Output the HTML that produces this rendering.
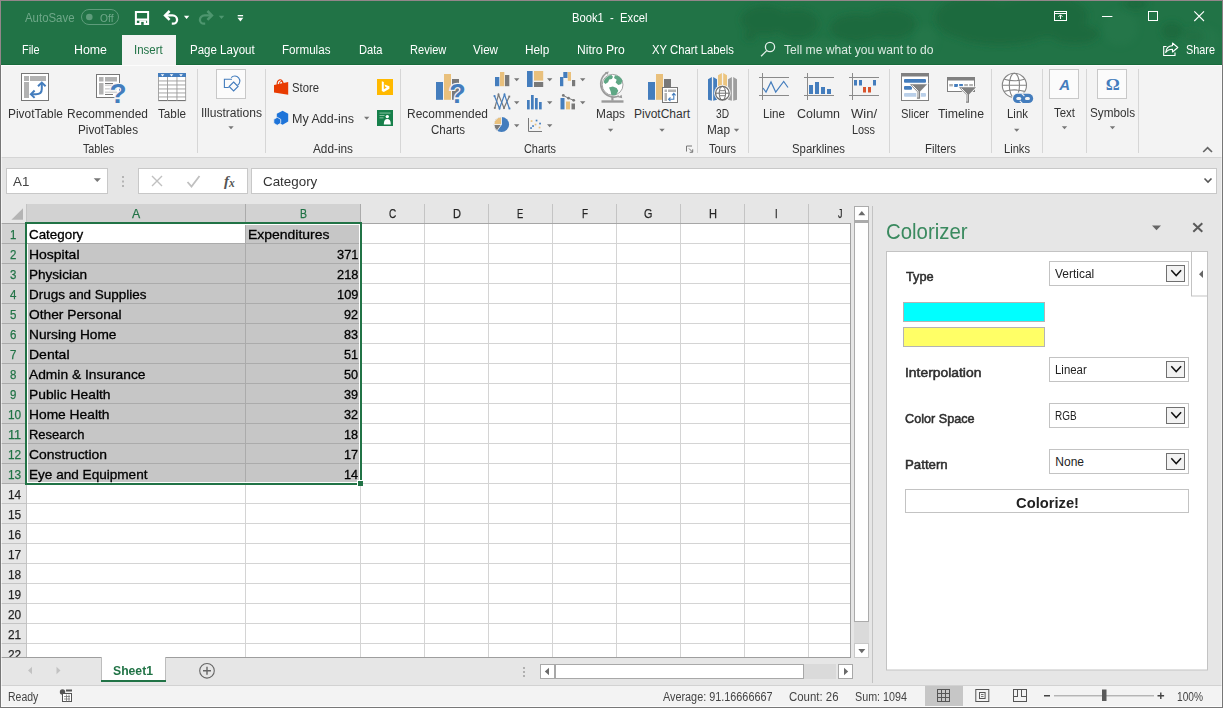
<!DOCTYPE html>
<html lang="en"><head><meta charset="utf-8"><title>Book1 - Excel</title>
<style>
html,body{margin:0;padding:0;}
body{width:1223px;height:708px;overflow:hidden;position:relative;background:#217346;font-family:"Liberation Sans",sans-serif;}
#g{position:absolute;left:0;top:0;}
.t{position:absolute;white-space:pre;line-height:20px;height:20px;transform-origin:0 50%;font-family:"Liberation Sans",sans-serif;}
.s{font-family:"Liberation Serif",serif;}
</style></head>
<body>
<svg id="g" width="1223" height="708" viewBox="0 0 1223 708">
<defs><filter id="blur2" x="-20%" y="-50%" width="140%" height="200%"><feGaussianBlur stdDeviation="3"/></filter></defs>
<rect x="0" y="0" width="1223" height="65" fill="#217346" />
<g fill="#1d693d" opacity="0.85" filter="url(#blur2)"><ellipse cx="765" cy="20" rx="24" ry="15"/><ellipse cx="797" cy="24" rx="22" ry="15"/><ellipse cx="750" cy="36" rx="6" ry="5"/><ellipse cx="856" cy="28" rx="26" ry="14"/><ellipse cx="890" cy="24" rx="26" ry="15"/><ellipse cx="975" cy="18" rx="40" ry="22"/><ellipse cx="1040" cy="16" rx="48" ry="22"/><ellipse cx="1075" cy="34" rx="24" ry="10"/><ellipse cx="1000" cy="36" rx="40" ry="9"/><ellipse cx="1172" cy="31" rx="10" ry="9"/><ellipse cx="1193" cy="36" rx="11" ry="7"/><ellipse cx="1136" cy="4" rx="12" ry="6"/></g>
<g fill="#2a7c4f" opacity="0.35" filter="url(#blur2)"><ellipse cx="925" cy="40" rx="12" ry="14"/><ellipse cx="1120" cy="28" rx="18" ry="18"/><ellipse cx="1200" cy="40" rx="20" ry="14"/><ellipse cx="825" cy="48" rx="30" ry="8"/></g>
<rect x="122" y="35" width="54" height="30" fill="#f3f3f3" />
<rect x="0" y="65" width="1223" height="92" fill="#f3f3f3" />
<rect x="0" y="157" width="1223" height="1" fill="#d5d5d5" />
<rect x="0" y="158" width="1223" height="46" fill="#e6e6e6" />
<rect x="6.5" y="168.5" width="101" height="25" fill="#ffffff" stroke="#c8c8c8"/>
<path d="M93.700 178.300h7.200l-3.600 3.800z" fill="#777"/>
<rect x="122" y="176" width="2" height="2" fill="#b4b4b4" />
<rect x="122" y="180.5" width="2" height="2" fill="#b4b4b4" />
<rect x="122" y="185" width="2" height="2" fill="#b4b4b4" />
<rect x="138.5" y="168.5" width="109" height="25" fill="#ffffff" stroke="#c8c8c8"/>
<path d="M152 176l10 10M162 176l-10 10" stroke="#c0c0c0" stroke-width="1.4" fill="none"/>
<path d="M187.5 182l4 4.5l8-10.5" stroke="#c0c0c0" stroke-width="1.8" fill="none"/>
<rect x="251.5" y="168.5" width="965" height="25" fill="#ffffff" stroke="#c8c8c8"/>
<path d="M1204.5 178.5l3.5 3.5l3.5-3.5" stroke="#555" stroke-width="1.6" fill="none"/>
<rect x="1" y="204" width="850" height="453" fill="#ffffff" />
<rect x="1" y="204" width="877" height="19" fill="#e6e6e6" />
<rect x="27" y="204" width="334" height="18" fill="#d2d2d2" />
<rect x="1" y="223" width="25" height="434" fill="#e6e6e6" />
<rect x="1" y="223" width="24" height="261" fill="#d2d2d2" />
<path d="M23 208.300v11.400h-11.600z" fill="#b4b4b4"/>
<rect x="245" y="204" width="1" height="19" fill="#ababab" />
<rect x="360" y="204" width="1" height="19" fill="#ababab" />
<rect x="424" y="204" width="1" height="19" fill="#c4c4c4" />
<rect x="488" y="204" width="1" height="19" fill="#c4c4c4" />
<rect x="552" y="204" width="1" height="19" fill="#c4c4c4" />
<rect x="616" y="204" width="1" height="19" fill="#c4c4c4" />
<rect x="680" y="204" width="1" height="19" fill="#c4c4c4" />
<rect x="744" y="204" width="1" height="19" fill="#c4c4c4" />
<rect x="808" y="204" width="1" height="19" fill="#c4c4c4" />
<rect x="26" y="204" width="1" height="19" fill="#c4c4c4" />
<rect x="1" y="223" width="850" height="1" fill="#a6a6a6" />
<rect x="1" y="243" width="25" height="1" fill="#ababab" />
<rect x="1" y="263" width="25" height="1" fill="#ababab" />
<rect x="1" y="283" width="25" height="1" fill="#ababab" />
<rect x="1" y="303" width="25" height="1" fill="#ababab" />
<rect x="1" y="323" width="25" height="1" fill="#ababab" />
<rect x="1" y="343" width="25" height="1" fill="#ababab" />
<rect x="1" y="363" width="25" height="1" fill="#ababab" />
<rect x="1" y="383" width="25" height="1" fill="#ababab" />
<rect x="1" y="403" width="25" height="1" fill="#ababab" />
<rect x="1" y="423" width="25" height="1" fill="#ababab" />
<rect x="1" y="443" width="25" height="1" fill="#ababab" />
<rect x="1" y="463" width="25" height="1" fill="#ababab" />
<rect x="1" y="483" width="25" height="1" fill="#ababab" />
<rect x="1" y="503" width="25" height="1" fill="#c4c4c4" />
<rect x="1" y="523" width="25" height="1" fill="#c4c4c4" />
<rect x="1" y="543" width="25" height="1" fill="#c4c4c4" />
<rect x="1" y="563" width="25" height="1" fill="#c4c4c4" />
<rect x="1" y="583" width="25" height="1" fill="#c4c4c4" />
<rect x="1" y="603" width="25" height="1" fill="#c4c4c4" />
<rect x="1" y="623" width="25" height="1" fill="#c4c4c4" />
<rect x="1" y="643" width="25" height="1" fill="#c4c4c4" />
<rect x="26" y="224" width="1" height="433" fill="#c4c4c4" />
<rect x="245" y="224" width="1" height="433" fill="#d4d4d4" />
<rect x="360" y="224" width="1" height="433" fill="#d4d4d4" />
<rect x="424" y="224" width="1" height="433" fill="#d4d4d4" />
<rect x="488" y="224" width="1" height="433" fill="#d4d4d4" />
<rect x="552" y="224" width="1" height="433" fill="#d4d4d4" />
<rect x="616" y="224" width="1" height="433" fill="#d4d4d4" />
<rect x="680" y="224" width="1" height="433" fill="#d4d4d4" />
<rect x="744" y="224" width="1" height="433" fill="#d4d4d4" />
<rect x="808" y="224" width="1" height="433" fill="#d4d4d4" />
<rect x="27" y="243" width="823" height="1" fill="#d4d4d4" />
<rect x="27" y="263" width="823" height="1" fill="#d4d4d4" />
<rect x="27" y="283" width="823" height="1" fill="#d4d4d4" />
<rect x="27" y="303" width="823" height="1" fill="#d4d4d4" />
<rect x="27" y="323" width="823" height="1" fill="#d4d4d4" />
<rect x="27" y="343" width="823" height="1" fill="#d4d4d4" />
<rect x="27" y="363" width="823" height="1" fill="#d4d4d4" />
<rect x="27" y="383" width="823" height="1" fill="#d4d4d4" />
<rect x="27" y="403" width="823" height="1" fill="#d4d4d4" />
<rect x="27" y="423" width="823" height="1" fill="#d4d4d4" />
<rect x="27" y="443" width="823" height="1" fill="#d4d4d4" />
<rect x="27" y="463" width="823" height="1" fill="#d4d4d4" />
<rect x="27" y="483" width="823" height="1" fill="#d4d4d4" />
<rect x="27" y="503" width="823" height="1" fill="#d4d4d4" />
<rect x="27" y="523" width="823" height="1" fill="#d4d4d4" />
<rect x="27" y="543" width="823" height="1" fill="#d4d4d4" />
<rect x="27" y="563" width="823" height="1" fill="#d4d4d4" />
<rect x="27" y="583" width="823" height="1" fill="#d4d4d4" />
<rect x="27" y="603" width="823" height="1" fill="#d4d4d4" />
<rect x="27" y="623" width="823" height="1" fill="#d4d4d4" />
<rect x="27" y="643" width="823" height="1" fill="#d4d4d4" />
<rect x="27" y="224" width="333" height="259" fill="#ffffff" />
<rect x="28" y="225" width="331" height="257" fill="#c6c6c6" />
<rect x="27" y="224" width="218" height="19" fill="#ffffff" />
<rect x="28" y="243" width="331" height="1" fill="#ababab" />
<rect x="28" y="263" width="331" height="1" fill="#ababab" />
<rect x="28" y="283" width="331" height="1" fill="#ababab" />
<rect x="28" y="303" width="331" height="1" fill="#ababab" />
<rect x="28" y="323" width="331" height="1" fill="#ababab" />
<rect x="28" y="343" width="331" height="1" fill="#ababab" />
<rect x="28" y="363" width="331" height="1" fill="#ababab" />
<rect x="28" y="383" width="331" height="1" fill="#ababab" />
<rect x="28" y="403" width="331" height="1" fill="#ababab" />
<rect x="28" y="423" width="331" height="1" fill="#ababab" />
<rect x="28" y="443" width="331" height="1" fill="#ababab" />
<rect x="28" y="463" width="331" height="1" fill="#ababab" />
<rect x="245" y="225" width="1" height="257" fill="#ababab" />
<rect x="27" y="243" width="218" height="1" fill="#ababab" />
<rect x="25" y="222" width="337" height="2" fill="#217346" />
<rect x="25" y="222" width="2" height="263" fill="#217346" />
<rect x="360" y="222" width="2" height="259" fill="#217346" />
<rect x="25" y="483" width="332" height="2" fill="#217346" />
<rect x="357" y="480" width="6" height="6" fill="#ffffff" />
<rect x="358" y="481" width="5" height="5" fill="#217346" />
<rect x="850" y="223" width="1" height="435" fill="#a0a0a0" />
<rect x="851" y="204" width="27" height="481" fill="#e6e6e6" />
<rect x="854.5" y="222.5" width="14" height="399" fill="#ffffff" stroke="#ababab"/>
<rect x="854.5" y="206.5" width="14" height="14" fill="#ffffff" stroke="#ababab"/>
<rect x="854" y="221" width="15" height="1.5" fill="#ababab" />
<path d="M858.3 215.3h7l-3.5-4.2z" fill="#6a6a6a"/>
<rect x="854.5" y="643.5" width="14" height="14" fill="#ffffff" stroke="#c8c8c8"/>
<path d="M858.3 649h7l-3.5 4.200z" fill="#6a6a6a"/>
<rect x="854" y="622" width="15" height="21" fill="#dadada" />
<rect x="872" y="206" width="1" height="477" fill="#c3c3c3" />
<rect x="0" y="658" width="851" height="27" fill="#e6e6e6" />
<rect x="1" y="657" width="850" height="1" fill="#9e9e9e" />
<path d="M32 666.800v7.400l-4-3.700z" fill="#c2c2c2"/><path d="M56.500 666.800v7.400l4-3.700z" fill="#c2c2c2"/>
<rect x="101" y="657" width="65" height="23" fill="#ffffff" />
<rect x="101" y="680" width="65" height="2" fill="#217346" />
<rect x="101" y="657" width="1" height="23" fill="#bdbdbd" /><rect x="165" y="657" width="1" height="23" fill="#bdbdbd" />
<circle cx="207" cy="670.800" r="7.300" fill="none" stroke="#666" stroke-width="1.100"/><path d="M203 670.800h8M207 666.800v8" stroke="#666" stroke-width="1.400"/>
<rect x="523" y="667" width="2" height="2" fill="#b0b0b0" />
<rect x="523" y="671" width="2" height="2" fill="#b0b0b0" />
<rect x="523" y="675" width="2" height="2" fill="#b0b0b0" />
<rect x="540.5" y="664.5" width="14" height="14" fill="#ffffff" stroke="#a8a8a8"/>
<path d="M549 667.800v7.400l-4.200-3.700z" fill="#6a6a6a"/>
<rect x="555.5" y="664.5" width="248" height="14" fill="#ffffff" stroke="#a8a8a8"/>
<rect x="804" y="664" width="32" height="15" fill="#dadada" />
<rect x="838.5" y="664.5" width="14" height="14" fill="#ffffff" stroke="#a8a8a8"/>
<path d="M844 667.800v7.400l4.200-3.700z" fill="#6a6a6a"/>
<rect x="0" y="685" width="1223" height="23" fill="#f3f3f3" />
<rect x="0" y="685" width="1223" height="1" fill="#d2d2d2" />
<circle cx="62.500" cy="692" r="2.700" fill="#555"/><rect x="66" y="689.5" width="6" height="2" fill="#555" /><rect x="62.5" y="693.5" width="9" height="8" fill="#ffffff" stroke="#555"/><path d="M64 696.500h6M64 699h6M66.500 694.500v7M69 694.500v7" stroke="#777" stroke-width="0.800"/>
<rect x="925" y="686" width="38" height="21" fill="#c6c6c6" />
<rect x="937.5" y="689.5" width="12" height="12" fill="none" stroke="#555"/><path d="M941.500 690v12M945.500 690v12M938 693.500h12M938 697.500h12" stroke="#555" stroke-width="1"/>
<rect x="975.8" y="689.5" width="13" height="12" fill="none" stroke="#555"/><rect x="979.5" y="692.5" width="5.6" height="6" fill="none" stroke="#555"/><path d="M981 694.500h2.600M981 696.500h2.600" stroke="#555" stroke-width="0.800"/>
<rect x="1013.5" y="689.5" width="13" height="12" fill="none" stroke="#555"/><path d="M1017.500 690v6.500M1021.500 690v6.500M1014 696.500h4M1021 696.500h5" stroke="#555" stroke-width="1"/>
<rect x="1044" y="695" width="6" height="1.5" fill="#444" />
<rect x="1054" y="695.3" width="100" height="1" fill="#9a9a9a" />
<rect x="1102" y="689.5" width="4.5" height="11.5" fill="#5a5a5a" />
<path d="M1157.500 695.800h6.600M1160.800 692.500v6.600" stroke="#444" stroke-width="1.400"/>
<rect x="873" y="204" width="350" height="481" fill="#e6e6e6" />
<rect x="886.5" y="251.5" width="321" height="418.5" fill="#ffffff" stroke="#c3c3c3"/>
<path d="M1152 225.500h9l-4.500 4.700z" fill="#666"/>
<path d="M1193.300 223.200l9 8.500M1202.300 223.200l-9 8.500" stroke="#5a5a5a" stroke-width="2"/>
<rect x="1191.5" y="251.5" width="16" height="44.5" fill="#ffffff" stroke="#c3c3c3"/>
<path d="M1203 270.300v7.700l-4-3.850z" fill="#666"/>
<rect x="1049.5" y="261.5" width="139" height="24" fill="#ffffff" stroke="#c3c3c3"/>
<rect x="1166.5" y="265.5" width="18" height="16" fill="#f2f2f2" stroke="#707070"/>
<path d="M1171.300 270.3l4.900 5.300l4.900-5.300" stroke="#111" stroke-width="1.500" fill="none"/>
<rect x="1049.5" y="357.5" width="139" height="24" fill="#ffffff" stroke="#c3c3c3"/>
<rect x="1166.5" y="361.5" width="18" height="16" fill="#f2f2f2" stroke="#707070"/>
<path d="M1171.300 366.3l4.900 5.300l4.900-5.300" stroke="#111" stroke-width="1.500" fill="none"/>
<rect x="1049.5" y="403.5" width="139" height="24" fill="#ffffff" stroke="#c3c3c3"/>
<rect x="1166.5" y="407.5" width="18" height="16" fill="#f2f2f2" stroke="#707070"/>
<path d="M1171.300 412.3l4.900 5.300l4.900-5.300" stroke="#111" stroke-width="1.500" fill="none"/>
<rect x="1049.5" y="449.5" width="139" height="24" fill="#ffffff" stroke="#c3c3c3"/>
<rect x="1166.5" y="453.5" width="18" height="16" fill="#f2f2f2" stroke="#707070"/>
<path d="M1171.300 458.3l4.900 5.300l4.900-5.300" stroke="#111" stroke-width="1.500" fill="none"/>
<rect x="903.5" y="302.5" width="141" height="19" fill="#00ffff" stroke="#b4b4b4"/>
<rect x="903.5" y="327.5" width="141" height="19" fill="#ffff66" stroke="#b4b4b4"/>
<rect x="905.5" y="489.5" width="283" height="23" fill="#ffffff" stroke="#c3c3c3"/>
<g font-family="Liberation Sans, sans-serif">
<rect x="81.5" y="9.5" width="37" height="15" rx="7.5" fill="none" stroke="#5e9c7b" stroke-width="1"/><circle cx="89.3" cy="17" r="3.3" fill="#5e9c7b"/><path d="M135.900 11.900h12.200v12h-12.200z" fill="none" stroke="#fff" stroke-width="2"/><rect x="136" y="18.5" width="12" height="2.2" fill="#fff" /><rect x="139.3" y="20.5" width="6.9" height="4.3" fill="#fff" /><rect x="141.2" y="21.9" width="2.5" height="3" fill="#217346" /><g fill="none" stroke="#fff" stroke-width="2.500"><path d="M169.600 11l-4.500 4.400l4.500 4.400"/><path d="M165.200 15.400h7.300a4.600 4.600 0 0 1 4.600 4.600a4 4 0 0 1-4 3.700h-1.300" stroke-width="2.300"/></g><path d="M183.900 15.800h5.400l-2.700 3.100z" fill="#fff"/><g fill="none" stroke="#4e966f" stroke-width="2.500"><path d="M207.400 11l4.500 4.400l-4.500 4.400"/><path d="M211.800 15.400h-7.300a4.600 4.600 0 0 0-4.600 4.600a4 4 0 0 0 4 3.700h1.300" stroke-width="2.300"/></g><path d="M218.800 15.800h5.400l-2.700 3.100z" fill="#4e966f"/><rect x="237.7" y="15" width="5.4" height="1.3" fill="#fff" /><path d="M237.500 17.700h5.800l-2.900 3.700z" fill="#fff"/><g fill="none" stroke="#e4efe9" stroke-width="1.3"><circle cx="770" cy="47" r="4.6"/><path d="M766.7 50.6l-5.6 5.6"/></g><g fill="none" stroke="#fff" stroke-width="1.1"><path d="M1166.5 46.5h-2.8v9h11.3v-3"/><path d="M1172.5 43l5.3 4.5l-5.3 4.5v-2.7c-3.3 0-5.2 1-6.8 3.2c.4-4 2.6-6.6 6.8-6.9z" stroke-linejoin="round"/></g><g fill="none" stroke="#fff" stroke-width="1"><rect x="1054.5" y="11.5" width="12" height="9"/><path d="M1054.5 13.5h12" /><path d="M1060.5 19v-4M1058.5 16.8l2-2l2 2"/></g><rect x="1102" y="16" width="10.4" height="1" fill="#fff" /><rect x="1148.5" y="11.5" width="9" height="9" fill="none" stroke="#fff" stroke-width="1"/><path d="M1194.3 11.3l9.7 9.7M1204 11.3l-9.7 9.7" stroke="#fff" stroke-width="1.1"/>
<rect x="197" y="69" width="1" height="84" fill="#d6d6d6" /><rect x="265" y="69" width="1" height="84" fill="#d6d6d6" /><rect x="400" y="69" width="1" height="84" fill="#d6d6d6" /><rect x="697" y="69" width="1" height="84" fill="#d6d6d6" /><rect x="748" y="69" width="1" height="84" fill="#d6d6d6" /><rect x="889" y="69" width="1" height="84" fill="#d6d6d6" /><rect x="991" y="69" width="1" height="84" fill="#d6d6d6" /><rect x="1042" y="69" width="1" height="84" fill="#d6d6d6" /><rect x="1086" y="69" width="1" height="84" fill="#d6d6d6" /><rect x="1138" y="69" width="1" height="84" fill="#d6d6d6" />
<rect x="21.5" y="73.5" width="27" height="27" fill="#fff" stroke="#777"/><rect x="24" y="76" width="5" height="5" fill="#b2b2b2" /><rect x="30" y="76" width="16" height="5" fill="#b2b2b2" /><rect x="24" y="82" width="5" height="16" fill="#b2b2b2" /><g fill="none" stroke="#447dbd" stroke-width="2"><path d="M31.500 94.200h4.500c3.800 0 5.800-1.800 5.800-5.200v-5.500"/><path d="M34.600 90.500l-3.700 3.700l3.700 3.700"/><path d="M38 86.300l3.800-3.700l3.800 3.700"/></g>
<rect x="96.5" y="74.5" width="23" height="23" fill="#fff" stroke="#777"/><rect x="99" y="77" width="4.5" height="4.5" fill="#b2b2b2" /><rect x="105" y="77" width="12" height="4.5" fill="#b2b2b2" /><rect x="99" y="83" width="4.5" height="11.5" fill="#b2b2b2" /><rect x="105" y="84.5" width="12" height="1.6" fill="#d4d4d4" /><rect x="105" y="88" width="12" height="1.6" fill="#d4d4d4" /><rect x="105" y="91.5" width="12" height="1.6" fill="#d4d4d4" /><rect x="105" y="83" width="8" height="1" fill="#777" /><rect x="105" y="94" width="8" height="1" fill="#777" /><text x="109.6" y="102.7" font-size="28" fill="#447dbd" font-weight="700" stroke="#f3f3f3" stroke-width="2.4" paint-order="stroke">?</text>
<rect x="158" y="77" width="28" height="24" fill="#fff" /><rect x="158" y="73" width="28" height="4" fill="#447dbd" /><path d="M160.7 74.2h3.6l-1.8 2.2z" fill="#fff"/><path d="M169.7 74.2h3.6l-1.8 2.2z" fill="#fff"/><path d="M179.2 74.2h3.6l-1.8 2.2z" fill="#fff"/><rect x="158" y="80.5" width="28" height="0.9" fill="#9c9c9c" /><rect x="158" y="84.5" width="28" height="0.9" fill="#9c9c9c" /><rect x="158" y="88.5" width="28" height="0.9" fill="#9c9c9c" /><rect x="158" y="92.5" width="28" height="0.9" fill="#9c9c9c" /><rect x="158" y="96.5" width="28" height="0.9" fill="#9c9c9c" /><rect x="158" y="100" width="28" height="1.1" fill="#757575" /><rect x="158" y="77" width="0.9" height="24" fill="#9c9c9c" /><rect x="167" y="77" width="0.9" height="24" fill="#9c9c9c" /><rect x="176.5" y="77" width="0.9" height="24" fill="#9c9c9c" /><rect x="185.2" y="77" width="0.9" height="24" fill="#9c9c9c" />
<rect x="216.5" y="69.5" width="29" height="29" fill="#fbfbfb" stroke="#c8c8c8"/><g fill="none" stroke="#447dbd" stroke-width="1.1"><path d="M232 79.3h-7.6v8.2h4.4"/><path d="M231.2 77.6a5 5 0 1 1 6.4 7.6"/><path d="M233.6 82l4.5 4.5l-4.5 4.5l-4.5-4.5z" fill="#fbfbfb"/></g><path d="M228.3 126.3h5.4l-2.7 3z" fill="#777"/>
<path d="M274 85l14.200-3v12.700l-14.200-2.100z" fill="#e83b01"/><path d="M277.3 85.4c-.6-3.4.6-5.3 2.4-5.6c1.7-.3 3 1 3.5 4" fill="none" stroke="#e83b01" stroke-width="1.2"/><path d="M279.6 84.6c-.2-2 .4-3 1.4-3.2c1-.2 1.8.6 2 2.400" fill="none" stroke="#e83b01" stroke-width="1"/><path d="M282.6 110.8l5.6 3v7.6l-5.6 3.4l-5.8-3.4v-7.600z" fill="#1e74d9"/><path d="M277.200 117.3l3.500 2v3.900l-3.500 2.100l-3.400-2.100v-3.900z" fill="#1e74d9" stroke="#f3f3f3" stroke-width="0.8"/><path d="M364 116.8h5.4l-2.7 3z" fill="#777"/><rect x="377" y="79" width="16" height="16" fill="#ffb900" /><path d="M381.8 81.2l2 .7v7.300l3-1.700l-1.500-.700l-.900-2.300l5 1.800v2.500l-5.600 3.300l-2-1.100z" fill="#fff"/><rect x="377" y="110" width="16" height="16" fill="#17804b" /><rect x="379.5" y="112.6" width="11" height="0.9" fill="#8fc7a8" /><rect x="379.5" y="115" width="5" height="0.9" fill="#8fc7a8" /><rect x="379.5" y="117.4" width="4" height="0.9" fill="#8fc7a8" /><circle cx="387.300" cy="116.6" r="1.700" fill="#fff"/><path d="M383.800 124.500c0-3.800 1.300-5.400 3.500-5.400s3.500 1.600 3.500 5.400z" fill="#fff"/>
<rect x="436" y="82" width="7" height="17.8" fill="#447dbd" /><rect x="444" y="74" width="7" height="25.8" fill="#e9c07c" /><rect x="452" y="79" width="7" height="20.8" fill="#797979" /><text x="449.3" y="102.7" font-size="27" fill="#447dbd" font-weight="700" stroke="#f3f3f3" stroke-width="2.4" paint-order="stroke">?</text>
<rect x="495" y="77" width="4.3" height="9.2" fill="#447dbd" /><rect x="500" y="72" width="4.3" height="14.2" fill="#e9c07c" /><rect x="505" y="75" width="4.3" height="11.2" fill="#797979" /><path d="M514 78.3h5.4l-2.7 3z" fill="#777"/><rect x="527" y="71" width="5.6" height="16" fill="#447dbd" /><rect x="534" y="71" width="9.2" height="9.6" fill="#e9c07c" /><rect x="534" y="82" width="9.2" height="5" fill="#797979" /><path d="M547 78.3h5.4l-2.7 3z" fill="#777"/><rect x="560" y="77" width="3.3" height="9.2" fill="#447dbd" /><rect x="563.3" y="72" width="4.2" height="6" fill="#447dbd" /><rect x="567.8" y="72" width="3.2" height="8.8" fill="#e9c07c" /><rect x="572" y="80" width="3.2" height="6.2" fill="#797979" /><path d="M580 78.3h5.4l-2.7 3z" fill="#777"/><g fill="none" stroke-width="1.2"><path d="M494.800 108l3.700-13.500l5.500 13.500l5.300-11.500" stroke="#797979"/><path d="M494.500 96l5 12.500l5-14l5 14.500" stroke="#447dbd"/></g><rect x="493.6" y="95.1" width="1.8" height="1.8" fill="#447dbd" /><rect x="498.6" y="107.6" width="1.8" height="1.8" fill="#447dbd" /><rect x="503.6" y="93.6" width="1.8" height="1.8" fill="#447dbd" /><rect x="508.6" y="107.6" width="1.8" height="1.8" fill="#447dbd" /><rect x="493.90000000000003" y="107.1" width="1.8" height="1.8" fill="#797979" /><rect x="497.6" y="93.6" width="1.8" height="1.8" fill="#797979" /><rect x="503.1" y="107.1" width="1.8" height="1.8" fill="#797979" /><rect x="508.40000000000003" y="95.6" width="1.8" height="1.8" fill="#797979" /><path d="M514 101.3h5.4l-2.7 3z" fill="#777"/><rect x="527" y="100" width="2.7" height="9.4" fill="#447dbd" /><rect x="531" y="95" width="2.7" height="14.4" fill="#447dbd" /><rect x="535" y="98" width="2.7" height="11.4" fill="#447dbd" /><rect x="539" y="102" width="2.7" height="7.4" fill="#447dbd" /><path d="M547 101.3h5.4l-2.7 3z" fill="#777"/><rect x="560.5" y="98" width="4" height="11.4" fill="#447dbd" /><rect x="566" y="101.5" width="4" height="7.9" fill="#e9c07c" /><rect x="571.5" y="103.5" width="3.5" height="5.9" fill="#797979" /><path d="M563.300 95.500l5.200 2.700l5.200 2.100" stroke="#797979" stroke-width="1" fill="none"/><circle cx="563.300" cy="95.400" r="1.400" fill="#797979"/><circle cx="568.500" cy="98.200" r="1.400" fill="#797979"/><circle cx="573.700" cy="100.300" r="1.400" fill="#797979"/><path d="M580 101.3h5.4l-2.7 3z" fill="#777"/><circle cx="501.5" cy="124.5" r="7.6" fill="#447dbd"/><path d="M501.5 124.5V116.9A7.6 7.6 0 0 0 493.9 124.5z" fill="#e9c07c" stroke="#f3f3f3" stroke-width="0.900"/><path d="M501.5 124.5H493.9A7.6 7.6 0 0 0 497.1 130.7z" fill="#797979" stroke="#f3f3f3" stroke-width="0.900"/><path d="M514 124.3h5.4l-2.7 3z" fill="#777"/><path d="M528.500 118v13.500h13.500" fill="none" stroke="#797979" stroke-width="1"/><rect x="530.7" y="120.2" width="1.7" height="1.7" fill="#e9c07c" /><rect x="535.7" y="119.7" width="1.7" height="1.7" fill="#447dbd" /><rect x="532.2" y="125.2" width="1.7" height="1.7" fill="#447dbd" /><rect x="534.7" y="123.7" width="1.7" height="1.7" fill="#e9c07c" /><rect x="539.2" y="122.7" width="1.7" height="1.7" fill="#447dbd" /><rect x="538.7" y="126.7" width="1.7" height="1.7" fill="#e9c07c" /><rect x="530.2" y="127.2" width="1.7" height="1.7" fill="#447dbd" /><path d="M547 124.3h5.4l-2.7 3z" fill="#777"/>
<circle cx="612.600" cy="84.800" r="10.400" fill="#fff" stroke="#9a9a9a" stroke-width="0.900"/><path d="M604.300 80c1.600-2.800 4.300-4.500 7-5l1.700 1.700l-1.100 2.200l-2.700.600l-1.100 2.700l-2.700 1.700l-1.700-1.700z" fill="#5fa785"/><path d="M615 75.300c3.300.400 6 2.200 7.400 5l-1.100 3.700l-3 1.100l-2.700-2.700l1.100-2.700l-2.700-1.700z" fill="#5fa785"/><path d="M609 87.500l3.800-1.100l3.800 1.700l1.700 2.700l-2.200 4.100c-1.600.400-3.300.400-4.700 0l-.800-3.600z" fill="#5fa785"/><path d="M606.500 72.800a13.300 13.300 0 0 0 12.500 23.300" fill="none" stroke="#9a9a9a" stroke-width="1.600"/><path d="M604.800 72.300l4-.900l-1.200 3.400z" fill="#9a9a9a"/><path d="M618 97.300l3.600-2.500l.600 3.500z" fill="#9a9a9a"/><rect x="611.3" y="97" width="2.2" height="3.6" fill="#9a9a9a" /><rect x="601.5" y="100.3" width="22" height="2.4" fill="#9a9a9a" /><path d="M607.9 128.7h5.4l-2.7 3z" fill="#777"/>
<rect x="648" y="82" width="7" height="17.8" fill="#447dbd" /><rect x="656" y="74" width="7" height="25.8" fill="#e9c07c" /><rect x="664" y="79" width="7" height="10" fill="#797979" /><rect x="662.5" y="87.5" width="15" height="15" fill="#fff" stroke="#777"/><rect x="664.5" y="89.5" width="2.5" height="2.5" fill="#b2b2b2" /><rect x="668" y="89.5" width="8" height="2.5" fill="#b2b2b2" /><rect x="664.5" y="93" width="2.5" height="8" fill="#b2b2b2" /><g fill="none" stroke="#447dbd" stroke-width="1.100"><path d="M668.800 99.300h5v-5.500"/><path d="M670.500 97.500l-1.900 1.800l1.900 1.800"/><path d="M672 95.300l1.800-1.900l1.800 1.900"/></g><path d="M659.3 128.7h5.4l-2.7 3z" fill="#777"/>
<path d="M708 79.3l3.900-2.300v23.800000000000004l-3.900-1.100z" fill="#447dbd"/><path d="M713.2 77l3.800 2.300v20.400000000000002l-3.800 1.100z" fill="#447dbd"/><path d="M718 75.3l3.900-2.300v23.1l-3.900-1.100z" fill="#ecc57f"/><path d="M723.2 73l3.800 2.300v19.7l-3.800 1.100z" fill="#ecc57f"/><path d="M728 79.3l3.900-2.300v23.800000000000004l-3.900-1.100z" fill="#9e9e9e"/><path d="M733.2 77l3.800 2.300v20.400000000000002l-3.800 1.100z" fill="#9e9e9e"/><circle cx="722.400" cy="93.200" r="8.300" fill="#f3f3f3"/><g fill="none" stroke="#6e6e6e" stroke-width="1.300"><circle cx="722.400" cy="93.200" r="6.800" fill="#fff"/><ellipse cx="722.400" cy="93.200" rx="3.200" ry="6.800" stroke-width="1"/><path d="M715.600 93.200h13.600" stroke-width="1"/><path d="M719.500 90.700h5.800M719.500 95.700h5.800" stroke-width="0.900"/></g><path d="M733.8 128.7h5.4l-2.7 3z" fill="#777"/>
<rect x="759" y="77" width="30" height="1" fill="#8a8a8a" /><rect x="759" y="95" width="30" height="1" fill="#8a8a8a" /><rect x="762" y="73" width="1" height="27" fill="#8a8a8a" /><path d="M763 88l3 4l5-10l4.700 10l8-10.500l4.300 6" fill="none" stroke="#447dbd" stroke-width="1.200"/><rect x="804" y="77" width="30" height="1" fill="#8a8a8a" /><rect x="804" y="95" width="30" height="1" fill="#8a8a8a" /><rect x="807" y="73" width="1" height="27" fill="#8a8a8a" /><rect x="809" y="85" width="4" height="9" fill="#447dbd" /><rect x="815" y="82" width="4" height="12" fill="#447dbd" /><rect x="821" y="87" width="4" height="7" fill="#447dbd" /><rect x="827" y="89" width="4" height="5" fill="#447dbd" /><rect x="849" y="77" width="30" height="1" fill="#8a8a8a" /><rect x="849" y="95" width="30" height="1" fill="#8a8a8a" /><rect x="852" y="73" width="1" height="27" fill="#8a8a8a" /><rect x="854" y="80" width="3" height="5.5" fill="#447dbd" /><rect x="859" y="80" width="3" height="5.5" fill="#447dbd" /><rect x="873" y="80" width="3" height="5.5" fill="#447dbd" /><rect x="863" y="87" width="3" height="5.5" fill="#d9542c" /><rect x="868" y="87" width="3" height="5.5" fill="#d9542c" />
<rect x="901.5" y="73.5" width="27" height="27" fill="#fff" stroke="#808080"/><rect x="901" y="73" width="28" height="3.5" fill="#808080" /><rect x="904" y="79" width="22" height="3.8" fill="#447dbd" rx="1"/><rect x="904" y="86" width="8" height="3.8" fill="#447dbd" rx="1"/><rect x="904" y="93" width="22" height="3.8" fill="#b9cfe9" rx="1"/><path d="M910 84.2h17l-7 7.200v7.4h-3v-7.4z" fill="#808080" stroke="#f8f8f8" stroke-width="1.600" paint-order="stroke"/><path d="M912.4 85.3l5.600 5.900v6.4" fill="none" stroke="#fff" stroke-width="1"/><rect x="947.5" y="77.5" width="27" height="14" fill="#fff" stroke="#808080"/><rect x="947" y="77" width="28" height="3.5" fill="#808080" /><rect x="949.2" y="84" width="3.7" height="2.4" fill="#b2b2b2" /><rect x="954.2" y="84" width="3.7" height="3" fill="#447dbd" /><rect x="959.2" y="84" width="3.7" height="2.2" fill="#447dbd" /><rect x="964.2" y="84" width="3.7" height="2.2" fill="#b2b2b2" /><rect x="969.2" y="84" width="3.7" height="2.2" fill="#b2b2b2" /><path d="M959 87.3h17l-7 7.200v8.3h-3v-8.3z" fill="#808080" stroke="#f8f8f8" stroke-width="1.600" paint-order="stroke"/><path d="M961.4 88.39999999999999l5.600 5.900v7.300000000000001" fill="none" stroke="#fff" stroke-width="1"/>
<g fill="none" stroke="#858585" stroke-width="1.100"><circle cx="1014.400" cy="85.300" r="12.100" fill="#fff"/><ellipse cx="1014.400" cy="85.300" rx="5.100" ry="12.100"/><path d="M1002.300 85.300h24.200M1004.200 79.200q10.200 3 20.400 0M1004.200 91.400q10.200-3 20.400 0"/></g><rect x="1011.800" y="92.600" width="22.600" height="11.700" rx="5.850" fill="#f3f3f3"/><rect x="1013" y="93.800" width="20.200" height="9.300" rx="4.650" fill="#447dbd"/><rect x="1016.300" y="96.900" width="4.900" height="3.200" rx="1.500" fill="#f3f3f3"/><rect x="1025" y="96.900" width="4.900" height="3.200" rx="1.500" fill="#f3f3f3"/><path d="M1021.800 93.600l2.600 2.600M1019.800 100.800l2.600 2.600" stroke="#f3f3f3" stroke-width="1.200" fill="none"/><path d="M1021 100.200l4.200-3.400" stroke="#f3f3f3" stroke-width="0" fill="none"/><path d="M1014 128.7h5.4l-2.7 3z" fill="#777"/>
<rect x="1049.5" y="69.5" width="29" height="29" fill="#fbfbfb" stroke="#c8c8c8"/><rect x="1097.5" y="69.5" width="29" height="29" fill="#fbfbfb" stroke="#c8c8c8"/><text x="1059.3" y="89.7" font-size="15" fill="#447dbd" font-weight="700" font-style="italic">A</text><text x="1105.8" y="90" font-size="17.5" fill="#447dbd" font-weight="700" font-family="Liberation Serif, serif">Ω</text><path d="M1061.8 126.3h5.4l-2.7 3z" fill="#777"/><path d="M1109.8 126.3h5.4l-2.7 3z" fill="#777"/><path d="M1203.200 152l4.400-4.400l4.400 4.400" fill="none" stroke="#666" stroke-width="1.700"/><path d="M686.500 151.500v-5.500h5.500" fill="none" stroke="#777" stroke-width="1"/><path d="M689 148.500l3.500 3.500M692.700 149.300v3h-3" fill="none" stroke="#777" stroke-width="1"/>
</g>
<rect x="1" y="65" width="1221" height="1" fill="#fcfcfc" />
<rect x="1" y="65" width="1" height="642" fill="#ffffff" opacity="0.55"/>
<rect x="1221" y="65" width="1" height="642" fill="#ffffff" opacity="0.45"/>
<rect x="1" y="706" width="1221" height="1" fill="#fcfcfc" />
<rect x="1" y="64" width="121" height="1" fill="#186a3b" /><rect x="176" y="64" width="1046" height="1" fill="#186a3b" />
<rect x="0" y="0" width="1223" height="1" fill="#93868a" />
<rect x="0" y="0" width="1" height="65" fill="#93868a" />
<rect x="0" y="65" width="1" height="643" fill="#777777" />
<rect x="1222" y="0" width="1" height="65" fill="#8a8085" />
<rect x="1222" y="65" width="1" height="643" fill="#777777" />
<rect x="0" y="707" width="1223" height="1" fill="#777777" />
</svg>
<span class="t" style="top:7.5px;font-size:12px;color:#6fa889;left:24.50px;transform:scaleX(0.9511);">AutoSave</span>
<span class="t" style="top:7.5px;font-size:11.5px;color:#6fa889;left:100.00px;transform:scaleX(0.8916);">Off</span>
<span class="t" style="top:7.5px;font-size:12px;color:#ffffff;left:572.00px;transform:scaleX(0.9368);">Book1  -  Excel</span>
<span class="t" style="top:39.5px;font-size:12px;color:#ffffff;left:21.60px;transform:scaleX(0.9099);">File</span>
<span class="t" style="top:39.5px;font-size:12px;color:#ffffff;left:74.30px;transform:scaleX(1.0307);">Home</span>
<span class="t" style="top:39.5px;font-size:12px;color:#217346;left:134.20px;transform:scaleX(0.9562);">Insert</span>
<span class="t" style="top:39.5px;font-size:12px;color:#ffffff;left:190.30px;transform:scaleX(0.9601);">Page Layout</span>
<span class="t" style="top:39.5px;font-size:12px;color:#ffffff;left:282.30px;transform:scaleX(0.9697);">Formulas</span>
<span class="t" style="top:39.5px;font-size:12px;color:#ffffff;left:358.50px;transform:scaleX(0.9267);">Data</span>
<span class="t" style="top:39.5px;font-size:12px;color:#ffffff;left:409.60px;transform:scaleX(0.9223);">Review</span>
<span class="t" style="top:39.5px;font-size:12px;color:#ffffff;left:473.00px;transform:scaleX(0.9691);">View</span>
<span class="t" style="top:39.5px;font-size:12px;color:#ffffff;left:525.30px;transform:scaleX(0.9843);">Help</span>
<span class="t" style="top:39.5px;font-size:12px;color:#ffffff;left:577.00px;transform:scaleX(1.0096);">Nitro Pro</span>
<span class="t" style="top:39.5px;font-size:12px;color:#ffffff;left:651.90px;transform:scaleX(0.9407);">XY Chart Labels</span>
<span class="t" style="top:39.5px;font-size:12px;color:#dbe9e1;left:784.00px;transform:scaleX(1.0096);">Tell me what you want to do</span>
<span class="t" style="top:39.5px;font-size:12px;color:#ffffff;left:1186.00px;transform:scaleX(0.9054);">Share</span>
<span class="t" style="top:104.0px;font-size:12px;color:#333333;left:7.50px;transform:scaleX(0.9932);">PivotTable</span>
<span class="t" style="top:104.0px;font-size:12px;color:#333333;left:67.00px;transform:scaleX(0.9954);">Recommended</span>
<span class="t" style="top:120.0px;font-size:12px;color:#333333;left:77.50px;transform:scaleX(0.9776);">PivotTables</span>
<span class="t" style="top:104.0px;font-size:12px;color:#333333;left:158.00px;transform:scaleX(0.9760);">Table</span>
<span class="t" style="top:139.0px;font-size:12px;color:#333333;left:82.50px;transform:scaleX(0.8937);">Tables</span>
<span class="t" style="top:102.5px;font-size:12px;color:#333333;left:200.50px;transform:scaleX(1.0049);">Illustrations</span>
<span class="t" style="top:77.5px;font-size:12px;color:#333333;left:292.00px;transform:scaleX(0.9412);">Store</span>
<span class="t" style="top:108.5px;font-size:12px;color:#333333;left:292.00px;transform:scaleX(1.0445);">My Add-ins</span>
<span class="t" style="top:139.0px;font-size:12px;color:#333333;left:313.00px;transform:scaleX(0.9831);">Add-ins</span>
<span class="t" style="top:104.0px;font-size:12px;color:#333333;left:407.00px;transform:scaleX(0.9954);">Recommended</span>
<span class="t" style="top:120.0px;font-size:12px;color:#333333;left:430.50px;transform:scaleX(0.9620);">Charts</span>
<span class="t" style="top:139.0px;font-size:12px;color:#333333;left:524.00px;transform:scaleX(0.9054);">Charts</span>
<span class="t" style="top:104.0px;font-size:12px;color:#333333;left:596.00px;transform:scaleX(0.9883);">Maps</span>
<span class="t" style="top:104.0px;font-size:12px;color:#333333;left:634.00px;">PivotChart</span>
<span class="t" style="top:104.0px;font-size:12px;color:#333333;left:716.00px;transform:scaleX(0.8473);">3D</span>
<span class="t" style="top:120.0px;font-size:12px;color:#333333;left:707.00px;transform:scaleX(0.9853);">Map</span>
<span class="t" style="top:139.0px;font-size:12px;color:#333333;left:708.50px;transform:scaleX(0.9201);">Tours</span>
<span class="t" style="top:104.0px;font-size:12px;color:#333333;left:763.00px;transform:scaleX(0.9697);">Line</span>
<span class="t" style="top:104.0px;font-size:12px;color:#333333;left:797.00px;transform:scaleX(1.0397);">Column</span>
<span class="t" style="top:104.0px;font-size:12px;color:#333333;left:850.50px;transform:scaleX(1.0833);">Win/</span>
<span class="t" style="top:120.0px;font-size:12px;color:#333333;left:852.00px;transform:scaleX(0.9070);">Loss</span>
<span class="t" style="top:139.0px;font-size:12px;color:#333333;left:791.50px;transform:scaleX(0.9459);">Sparklines</span>
<span class="t" style="top:104.0px;font-size:12px;color:#333333;left:901.00px;transform:scaleX(0.9328);">Slicer</span>
<span class="t" style="top:104.0px;font-size:12px;color:#333333;left:938.00px;transform:scaleX(1.0244);">Timeline</span>
<span class="t" style="top:139.0px;font-size:12px;color:#333333;left:924.50px;transform:scaleX(0.9488);">Filters</span>
<span class="t" style="top:104.0px;font-size:12px;color:#333333;left:1006.50px;transform:scaleX(0.9539);">Link</span>
<span class="t" style="top:139.0px;font-size:12px;color:#333333;left:1004.00px;transform:scaleX(0.9281);">Links</span>
<span class="t" style="top:102.5px;font-size:12px;color:#333333;left:1054.00px;transform:scaleX(0.9539);">Text</span>
<span class="t" style="top:102.5px;font-size:12px;color:#333333;left:1089.50px;transform:scaleX(0.9779);">Symbols</span>
<span class="t" style="top:171.5px;font-size:13.5px;color:#444444;left:12.70px;transform:scaleX(0.9869);">A1</span>
<span class="t" style="top:171.5px;font-size:13px;color:#333333;left:263.00px;transform:scaleX(1.0294);">Category</span>
<span class="t s" style="top:171.0px;font-size:15px;color:#555;font-weight:700;font-style:italic;left:224.10px;">f</span>
<span class="t s" style="top:172.5px;font-size:11.5px;color:#555;font-weight:700;font-style:italic;left:229.12px;">x</span>
<span class="t" style="top:203.5px;font-size:13.2px;color:#217346;-webkit-text-stroke:0.25px #217346;left:131.90px;transform:scaleX(0.9321);">A</span>
<span class="t" style="top:203.5px;font-size:13.2px;color:#217346;-webkit-text-stroke:0.25px #217346;left:299.50px;transform:scaleX(0.7957);">B</span>
<span class="t" style="top:203.5px;font-size:13.2px;color:#262626;-webkit-text-stroke:0.25px #262626;left:388.90px;transform:scaleX(0.7554);">C</span>
<span class="t" style="top:203.5px;font-size:13.2px;color:#262626;-webkit-text-stroke:0.25px #262626;left:452.50px;transform:scaleX(0.8393);">D</span>
<span class="t" style="top:203.5px;font-size:13.2px;color:#262626;-webkit-text-stroke:0.25px #262626;left:517.40px;transform:scaleX(0.7048);">E</span>
<span class="t" style="top:203.5px;font-size:13.2px;color:#262626;-webkit-text-stroke:0.25px #262626;left:581.50px;transform:scaleX(0.7442);">F</span>
<span class="t" style="top:203.5px;font-size:13.2px;color:#262626;-webkit-text-stroke:0.25px #262626;left:644.30px;transform:scaleX(0.8183);">G</span>
<span class="t" style="top:203.5px;font-size:13.2px;color:#262626;-webkit-text-stroke:0.25px #262626;left:708.50px;transform:scaleX(0.8393);">H</span>
<span class="t" style="top:203.5px;font-size:13.2px;color:#262626;-webkit-text-stroke:0.25px #262626;left:775.20px;transform:scaleX(0.7081);">I</span>
<span class="t" style="top:203.5px;font-size:13.2px;color:#262626;-webkit-text-stroke:0.25px #262626;left:838.30px;transform:scaleX(0.6673);">J</span>
<span class="t" style="top:224.5px;font-size:13.2px;color:#217346;-webkit-text-stroke:0.25px #217346;left:10.40px;transform:scaleX(0.8715);">1</span>
<span class="t" style="top:244.5px;font-size:13.2px;color:#217346;-webkit-text-stroke:0.25px #217346;left:10.40px;transform:scaleX(0.8715);">2</span>
<span class="t" style="top:264.5px;font-size:13.2px;color:#217346;-webkit-text-stroke:0.25px #217346;left:10.40px;transform:scaleX(0.8715);">3</span>
<span class="t" style="top:284.5px;font-size:13.2px;color:#217346;-webkit-text-stroke:0.25px #217346;left:10.40px;transform:scaleX(0.8715);">4</span>
<span class="t" style="top:304.5px;font-size:13.2px;color:#217346;-webkit-text-stroke:0.25px #217346;left:10.40px;transform:scaleX(0.8715);">5</span>
<span class="t" style="top:324.5px;font-size:13.2px;color:#217346;-webkit-text-stroke:0.25px #217346;left:10.40px;transform:scaleX(0.8715);">6</span>
<span class="t" style="top:344.5px;font-size:13.2px;color:#217346;-webkit-text-stroke:0.25px #217346;left:10.40px;transform:scaleX(0.8715);">7</span>
<span class="t" style="top:364.5px;font-size:13.2px;color:#217346;-webkit-text-stroke:0.25px #217346;left:10.40px;transform:scaleX(0.8715);">8</span>
<span class="t" style="top:384.5px;font-size:13.2px;color:#217346;-webkit-text-stroke:0.25px #217346;left:10.40px;transform:scaleX(0.8715);">9</span>
<span class="t" style="top:404.5px;font-size:13.2px;color:#217346;-webkit-text-stroke:0.25px #217346;left:7.60px;transform:scaleX(0.8997);">10</span>
<span class="t" style="top:424.5px;font-size:13.2px;color:#217346;-webkit-text-stroke:0.25px #217346;left:7.60px;transform:scaleX(0.9633);">11</span>
<span class="t" style="top:444.5px;font-size:13.2px;color:#217346;-webkit-text-stroke:0.25px #217346;left:7.60px;transform:scaleX(0.8997);">12</span>
<span class="t" style="top:464.5px;font-size:13.2px;color:#217346;-webkit-text-stroke:0.25px #217346;left:7.60px;transform:scaleX(0.8997);">13</span>
<span class="t" style="top:484.5px;font-size:13.2px;color:#262626;-webkit-text-stroke:0.25px #262626;left:7.60px;transform:scaleX(0.8997);">14</span>
<span class="t" style="top:504.5px;font-size:13.2px;color:#262626;-webkit-text-stroke:0.25px #262626;left:7.60px;transform:scaleX(0.8997);">15</span>
<span class="t" style="top:524.5px;font-size:13.2px;color:#262626;-webkit-text-stroke:0.25px #262626;left:7.60px;transform:scaleX(0.8997);">16</span>
<span class="t" style="top:544.5px;font-size:13.2px;color:#262626;-webkit-text-stroke:0.25px #262626;left:7.60px;transform:scaleX(0.8997);">17</span>
<span class="t" style="top:564.5px;font-size:13.2px;color:#262626;-webkit-text-stroke:0.25px #262626;left:7.60px;transform:scaleX(0.8997);">18</span>
<span class="t" style="top:584.5px;font-size:13.2px;color:#262626;-webkit-text-stroke:0.25px #262626;left:7.60px;transform:scaleX(0.8997);">19</span>
<span class="t" style="top:604.5px;font-size:13.2px;color:#262626;-webkit-text-stroke:0.25px #262626;left:7.60px;transform:scaleX(0.8997);">20</span>
<span class="t" style="top:624.5px;font-size:13.2px;color:#262626;-webkit-text-stroke:0.25px #262626;left:7.60px;transform:scaleX(0.8997);">21</span>
<span class="t" style="top:644.5px;font-size:13.2px;color:#262626;height:12.5px;overflow:hidden;-webkit-text-stroke:0.25px #262626;left:7.60px;transform:scaleX(0.8997);">22</span>
<span class="t" style="top:224.5px;font-size:13.2px;color:#000000;-webkit-text-stroke:0.3px #000000;left:29.40px;transform:scaleX(1.0147);">Category</span>
<span class="t" style="top:224.5px;font-size:13.2px;color:#000000;-webkit-text-stroke:0.3px #000000;left:248.40px;transform:scaleX(1.0587);">Expenditures</span>
<span class="t" style="top:244.5px;font-size:13.2px;color:#000000;-webkit-text-stroke:0.3px #000000;left:29.40px;transform:scaleX(1.0597);">Hospital</span>
<span class="t" style="top:244.5px;font-size:13.2px;color:#000000;-webkit-text-stroke:0.3px #000000;left:336.80px;transform:scaleX(0.9720);">371</span>
<span class="t" style="top:264.5px;font-size:13.2px;color:#000000;-webkit-text-stroke:0.3px #000000;left:29.40px;transform:scaleX(1.0274);">Physician</span>
<span class="t" style="top:264.5px;font-size:13.2px;color:#000000;-webkit-text-stroke:0.3px #000000;left:336.80px;transform:scaleX(0.9720);">218</span>
<span class="t" style="top:284.5px;font-size:13.2px;color:#000000;-webkit-text-stroke:0.3px #000000;left:29.40px;transform:scaleX(1.0208);">Drugs and Supplies</span>
<span class="t" style="top:284.5px;font-size:13.2px;color:#000000;-webkit-text-stroke:0.3px #000000;left:336.80px;transform:scaleX(0.9720);">109</span>
<span class="t" style="top:304.5px;font-size:13.2px;color:#000000;-webkit-text-stroke:0.3px #000000;left:29.40px;transform:scaleX(1.0428);">Other Personal</span>
<span class="t" style="top:304.5px;font-size:13.2px;color:#000000;-webkit-text-stroke:0.3px #000000;left:344.10px;transform:scaleX(0.9610);">92</span>
<span class="t" style="top:324.5px;font-size:13.2px;color:#000000;-webkit-text-stroke:0.3px #000000;left:29.40px;transform:scaleX(1.0380);">Nursing Home</span>
<span class="t" style="top:324.5px;font-size:13.2px;color:#000000;-webkit-text-stroke:0.3px #000000;left:344.10px;transform:scaleX(0.9610);">83</span>
<span class="t" style="top:344.5px;font-size:13.2px;color:#000000;-webkit-text-stroke:0.3px #000000;left:29.40px;transform:scaleX(1.0623);">Dental</span>
<span class="t" style="top:344.5px;font-size:13.2px;color:#000000;-webkit-text-stroke:0.3px #000000;left:344.10px;transform:scaleX(0.9610);">51</span>
<span class="t" style="top:364.5px;font-size:13.2px;color:#000000;-webkit-text-stroke:0.3px #000000;left:29.40px;transform:scaleX(1.0456);">Admin &amp; Insurance</span>
<span class="t" style="top:364.5px;font-size:13.2px;color:#000000;-webkit-text-stroke:0.3px #000000;left:344.10px;transform:scaleX(0.9610);">50</span>
<span class="t" style="top:384.5px;font-size:13.2px;color:#000000;-webkit-text-stroke:0.3px #000000;left:29.40px;transform:scaleX(1.0489);">Public Health</span>
<span class="t" style="top:384.5px;font-size:13.2px;color:#000000;-webkit-text-stroke:0.3px #000000;left:344.10px;transform:scaleX(0.9610);">39</span>
<span class="t" style="top:404.5px;font-size:13.2px;color:#000000;-webkit-text-stroke:0.3px #000000;left:29.40px;transform:scaleX(1.0459);">Home Health</span>
<span class="t" style="top:404.5px;font-size:13.2px;color:#000000;-webkit-text-stroke:0.3px #000000;left:344.10px;transform:scaleX(0.9610);">32</span>
<span class="t" style="top:424.5px;font-size:13.2px;color:#000000;-webkit-text-stroke:0.3px #000000;left:29.40px;transform:scaleX(0.9831);">Research</span>
<span class="t" style="top:424.5px;font-size:13.2px;color:#000000;-webkit-text-stroke:0.3px #000000;left:344.10px;transform:scaleX(0.9610);">18</span>
<span class="t" style="top:444.5px;font-size:13.2px;color:#000000;-webkit-text-stroke:0.3px #000000;left:29.40px;transform:scaleX(1.0534);">Construction</span>
<span class="t" style="top:444.5px;font-size:13.2px;color:#000000;-webkit-text-stroke:0.3px #000000;left:344.10px;transform:scaleX(0.9610);">17</span>
<span class="t" style="top:464.5px;font-size:13.2px;color:#000000;-webkit-text-stroke:0.3px #000000;left:29.40px;transform:scaleX(1.0295);">Eye and Equipment</span>
<span class="t" style="top:464.5px;font-size:13.2px;color:#000000;-webkit-text-stroke:0.3px #000000;left:344.10px;transform:scaleX(0.9610);">14</span>
<span class="t" style="top:660.9px;font-size:12.5px;color:#217346;font-weight:700;left:113.20px;transform:scaleX(0.9756);">Sheet1</span>
<span class="t" style="top:687.0px;font-size:12px;color:#444444;left:8.40px;transform:scaleX(0.8735);">Ready</span>
<span class="t" style="top:687.0px;font-size:12px;color:#444444;left:663.00px;transform:scaleX(0.9033);">Average: 91.16666667</span>
<span class="t" style="top:687.0px;font-size:12px;color:#444444;left:789.00px;transform:scaleX(0.9511);">Count: 26</span>
<span class="t" style="top:687.0px;font-size:12px;color:#444444;left:855.00px;transform:scaleX(0.8958);">Sum: 1094</span>
<span class="t" style="top:687.0px;font-size:12px;color:#444444;left:1176.50px;transform:scaleX(0.8468);">100%</span>
<span class="t" style="top:221.8px;font-size:21.5px;color:#3a8a5f;left:886.20px;transform:scaleX(0.9485);">Colorizer</span>
<span class="t" style="top:266.5px;font-size:13px;color:#2e2e2e;-webkit-text-stroke:0.5px #2e2e2e;left:905.60px;transform:scaleX(0.9827);">Type</span>
<span class="t" style="top:362.5px;font-size:13px;color:#2e2e2e;-webkit-text-stroke:0.5px #2e2e2e;left:905.40px;transform:scaleX(1.0676);">Interpolation</span>
<span class="t" style="top:408.5px;font-size:13px;color:#2e2e2e;-webkit-text-stroke:0.5px #2e2e2e;left:905.40px;transform:scaleX(0.9728);">Color Space</span>
<span class="t" style="top:454.5px;font-size:13px;color:#2e2e2e;-webkit-text-stroke:0.5px #2e2e2e;left:905.40px;transform:scaleX(1.0186);">Pattern</span>
<span class="t" style="top:263.6px;font-size:12px;color:#222222;left:1055.30px;transform:scaleX(0.9960);">Vertical</span>
<span class="t" style="top:359.6px;font-size:12px;color:#222222;left:1055.30px;transform:scaleX(0.9503);">Linear</span>
<span class="t" style="top:405.6px;font-size:12px;color:#222222;left:1055.30px;transform:scaleX(0.8303);">RGB</span>
<span class="t" style="top:451.6px;font-size:12px;color:#222222;left:1055.30px;">None</span>
<span class="t" style="top:493.0px;font-size:15.5px;color:#222222;font-weight:700;left:1015.50px;transform:scaleX(0.9500);">Colorize!</span>
</body></html>
